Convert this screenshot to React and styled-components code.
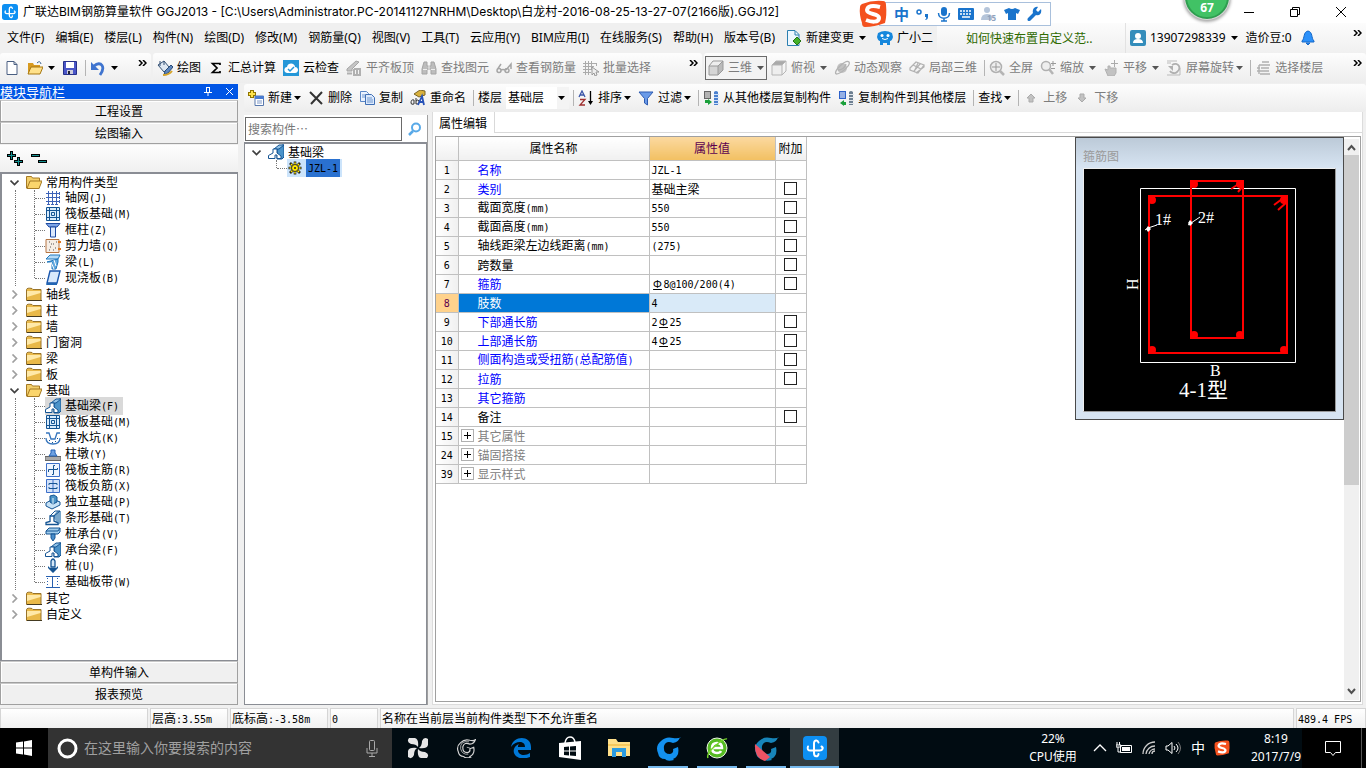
import React from 'react'
import styled, { createGlobalStyle, css } from 'styled-components'

const GlobalStyle=createGlobalStyle`
* { box-sizing: border-box; }
body { margin: 0; background: #f0f0f0; color: #000; font-family: "Noto Sans", "Noto Sans CJK SC", sans-serif; font-size: 12px; line-height: 16px; }
button, input, select { font: inherit; color: inherit; margin: 0; padding: 0; border: 0; background: none; }
button { white-space: nowrap; text-align: left; }
svg { display: block; flex: none; }
ul { list-style: none; margin: 0; padding: 0; }
`;

const song='"Noto Sans CJK SC", sans-serif';

const Page=styled.div`
display: flex;
flex-direction: column;
min-height: 100vh;
overflow: hidden;
`;

const Latin=styled.span`
font-family: "DejaVu Sans Mono", monospace;
font-size: 10px;
white-space: pre;
`;

/* half-width latin set beside full-width chinese */
const Mixed=({text})=>text.split(/([\x20-\x7e]+)/).map((part,i)=>(
  /^[\x20-\x7e]+$/.test(part)?<Latin key={i}>{part}</Latin>:part
));

/* ---------- title bar ---------- */
const TitleBar=styled.header`
position: relative;
display: flex;
align-items: center;
height: 23px;
padding: 0 17px 0 2px;
gap: 5px;
background: #fff;
white-space: nowrap;
`;

const TitleText=styled.h1`
flex: 1;
margin: 0;
font-family: Inter, "Noto Sans CJK SC", sans-serif;
font-size: 12px;
font-weight: 400;
`;

const WindowButtons=styled.div`
display: flex;
gap: 30px;
`;

const Ime=styled.div`
position: absolute;
z-index: 2;
top: 0;
right: 315px;
display: flex;
align-items: center;
height: 27px;
& > svg { z-index: 1; }
`;

const ImeBar=styled.div`
display: flex;
align-items: center;
gap: 7px;
height: 24px;
margin-left: -8px;
padding: 0 8px 0 14px;
border: 1px solid #a9c0dc;
background: #fff;
color: #1a74cc;
font-size: 15px;
font-weight: 700;
`;

const Ball=styled.div`
position: absolute;
z-index: 2;
top: -25px;
right: 137px;
width: 44px;
height: 44px;
padding-top: 23px;
border-radius: 50%;
border: 2px solid #2f9e50;
box-shadow: 0 0 0 1px #d8d8d8, 0 1px 3px 2px #aaa;
background: #41c265;
color: #fff;
font-size: 12px;
font-weight: 700;
text-align: center;
`;

/* ---------- menus and tool strips ---------- */
const MenuRow=styled.nav`
display: flex;
align-items: stretch;
height: 30px;
`;

const MenuList=styled.div`
display: flex;
align-items: center;
gap: 11px;
flex: none;
width: 937px;
padding-left: 7px;
`;

const MenuButton=styled.button`
display: flex;
align-items: center;
gap: 4px;
`;

const Tip=styled.a`
flex: none;
display: flex;
align-items: center;
width: 188px;
padding-left: 29px;
background: linear-gradient(#fcfcfc, #f0f0f0);
color: #2f6a00;
font-family: ${song};
text-decoration: none;
`;

const Account=styled.div`
display: flex;
align-items: center;
gap: 8px;
flex: 1;
padding: 0 4px 0 4px;
border-left: 1px solid #e2e2e2;
background: linear-gradient(#fcfcfc, #f0f0f0);
white-space: nowrap;
`;

const More=styled.button`
align-self: flex-start;
margin: 7px 0 0 auto;
`;

const ToolRow=styled.div`
display: flex;
height: 30px;
margin-bottom: 1px;
gap: 2px;
`;

const Strip=styled.div`
display: flex;
align-items: center;
flex: ${({$width})=>$width?"none":1};
width: ${({$width})=>$width?$width+"px":"auto"};
height: 30px;
padding: 0 4px;
border-radius: 3px;
background: linear-gradient(#fdfdfd, #ededed);
white-space: nowrap;
`;

const PartStrip=styled(Strip)`
flex: none;
height: 28px;
`;

const Tool=styled.button`
display: flex;
align-items: center;
gap: 4px;
margin-right: 7px;
color: ${({$off})=>$off?"#7d7d7d":"#000"};
${({$boxed})=>$boxed&&css`
height: 24px;
margin: 0 4px 0 -3px;
padding: 0 2px;
border: 1px solid #6b6b6b;
background: #f3f3f3;
`}
`;

const Rule=styled.span`
flex: none;
width: 1px;
height: 16px;
margin-right: 4px;
background: #b4b4b4;
`;

const CaretBox=styled.span`
margin-left: ${({$tight})=>$tight?"-2px":"1px"};
`;

const Floor=styled.label`
display: flex;
align-items: center;
gap: 4px;
margin-right: 4px;
`;

const FloorPick=styled.span`
display: flex;
align-items: center;
height: 22px;
padding-right: 4px;
background: linear-gradient(90deg, #fff 51px, #f4f4f4 51px);
`;

const FloorSelect=styled.select`
appearance: none;
width: 51px;
padding-left: 2px;
outline: none;
`;

/* ---------- body ---------- */
const Body=styled.main`
display: flex;
flex: 1;
gap: 6px;
`;

const Sidebar=styled.aside`
display: flex;
flex-direction: column;
flex: none;
width: 238px;
font-family: ${song};
`;

const SideTitle=styled.h2`
display: flex;
align-items: center;
gap: 13px;
height: 15px;
margin: 0 0 1px;
padding-right: 4px;
background: #0055e5;
color: #fff;
font-size: 13px;
font-weight: 400;
line-height: 15px;
`;

const Grow=styled.span`
flex: 1;
`;

const NavButton=styled.button`
height: 22px;
border: 1px solid #a0a0a0;
border-top-color: #c8c8c8;
box-shadow: inset 1px 1px #fff;
background: #f0f0f0;
text-align: center;
`;

const FoldBar=styled.div`
display: flex;
align-items: center;
gap: 8px;
height: 27px;
margin-top: 1px;
padding-left: 7px;
background: linear-gradient(#fdfdfd, #f0f0f0);
`;

const Tree=styled.ul`
flex: 1;
border: solid #8a8d94;
border-width: ${({$thin})=>$thin?"2px 1px 1px 1px":"2px 1px 1px 2px"};
background: #fff;
padding-left: ${({$thin})=>$thin?"0":"1px"};
font-family: ${song};
white-space: nowrap;
`;

const Row=styled.div`
display: flex;
align-items: center;
height: 16px;
line-height: 16px;
`;

const Twist=styled.button`
width: 23px;
padding-left: 7px;
`;

const Leaf=styled.span`
display: flex;
align-items: center;
background: ${({$on})=>$on?"#d9d9d9":"transparent"};
`;

const Label=styled.span`
padding: 0 4px;
`;

const Trunk=styled.span`
align-self: stretch;
width: 19px;
margin-left: 12px;
border-left: 1px dotted ${({$bare})=>$bare?"transparent":"#777"};
`;

const Branch=styled.span`
align-self: flex-start;
width: 11px;
height: ${({$last})=>$last?"8px":"16px"};
border-left: 1px dotted #777;
&::after {
  content: "";
  display: block;
  height: 8px;
  border-bottom: 1px dotted #777;
}
`;

const Work=styled.section`
display: flex;
flex-direction: column;
flex: 1;
min-width: 0;
`;

const Columns=styled.div`
display: flex;
flex: 1;
gap: 4px;
`;

const Parts=styled.div`
display: flex;
flex-direction: column;
flex: none;
width: 184px;
margin-top: 3px;
background: #fff;
border-right: 1px solid #a0a0a0;
font-family: ${song};
`;

const SearchRow=styled.form`
display: flex;
align-items: center;
gap: 5px;
height: 27px;
padding-left: 1px;
`;

const SearchInput=styled.input`
width: 157px;
height: 24px;
padding: 0 2px;
border: 1px solid #6a6a6a;
background: #fff;
&::placeholder { color: #777; opacity: 1; }
`;

const Picked=styled.span`
display: flex;
gap: 3px;
align-items: center;
padding: 0 2px 0 0;
background: #cce4fb;
`;

const PickedName=styled.span`
padding: 0 2px;
background: #2a71d0;
`;

const Editor=styled.div`
display: flex;
flex-direction: column;
flex: 1;
min-width: 0;
margin-right: 3px;
background: #fff;
border: solid #dcdcdc;
border-width: 0 1px 1px;
font-family: ${song};
`;

const Tabs=styled.div`
height: 21px;
border-bottom: 1px solid #d9d9d9;
`;

const Tab=styled.button`
height: 21px;
padding: 0 7px 0 6px;
border-right: 1px solid #d9d9d9;
background: #fff;
`;

const Canvas=styled.div`
display: flex;
align-items: flex-start;
flex: 1;
margin: 3px 1px 2px 2px;
border: 1px solid #a0a0a0;
`;

const Grid=styled.table`
width: 370px;
table-layout: fixed;
border-collapse: collapse;
`;

const HeadCell=styled.th`
height: 23px;
padding: 0;
border: 1px solid #c0c0c0;
border-top: 0;
border-left: 0;
background: ${({$hot})=>$hot?"linear-gradient(#fbd9a0, #f2c062)":"linear-gradient(#fff, #f0f0f0)"};
color: ${({$hot})=>$hot?"#5c0050":"#000"};
font-weight: 400;
`;

const NumCell=styled.th`
height: 19px;
padding: 0;
border: solid #c0c0c0;
border-width: 0 1px 1px 0;
background: ${({$on})=>$on?"#ffd28c":"linear-gradient(90deg, #fff, #f0f0f0)"};
color: ${({$on})=>$on?"#5c0050":"#000"};
font-weight: 400;
line-height: 16px;
`;

const nameColors={blue:"#0000ff",black:"#000",gray:"#808080"};

const NameCell=styled.td`
padding: 0 0 0 ${({$fold})=>$fold?"2px":"19px"};
border: solid #c0c0c0;
border-width: 0 1px 1px 0;
background: ${({$on})=>$on?"#0078d7":"#fff"};
color: ${({$tone,$on})=>$on?"#fff":nameColors[$tone]};
line-height: 16px;
`;

const FoldName=styled.span`
display: flex;
align-items: center;
gap: 4px;
`;

const Plus=styled.button`
display: flex;
align-items: center;
justify-content: center;
width: 13px;
height: 13px;
border: 1px solid #b0b0b0;
color: #000;
`;

const ValueCell=styled.td`
padding: 0 0 0 2px;
border: solid #c0c0c0;
border-width: 0 1px 1px 0;
background: ${({$on})=>$on?"#d9eaf8":"#fff"};
line-height: 16px;
`;

const Steel=styled.span`
display: inline-block;
width: 12px;
font-size: 11px;
text-align: center;
text-decoration: underline;
`;

const CheckCell=styled.td`
padding: 0;
border: solid #c0c0c0;
border-width: 0 1px 1px 0;
line-height: 0;
text-align: center;
`;

const Check=styled.input`
appearance: none;
width: 13px;
height: 13px;
border: 1px solid #222;
background: #fff;
vertical-align: top;
`;

const Preview=styled.figure`
display: flex;
flex-direction: column;
margin: 0 0 0 auto;
padding: 0 7px 7px;
border: 1px solid #4a4a4a;
background: linear-gradient(#bccad8, #d7e4f2 30px);
`;

const Caption=styled.figcaption`
height: 30px;
padding-top: 10px;
color: #9a9a9a;
`;

const Drawing=styled.svg`
width: 253px;
height: 244px;
border: 1px solid #eee;
border-right-color: #999;
border-bottom-color: #999;
background: #000;
font-family: "Liberation Serif", "Noto Sans CJK SC", serif;
`;

const ScrollBar=styled.div`
display: flex;
flex-direction: column;
align-self: stretch;
align-items: center;
width: 15px;
margin: 2px 1px 1px 0;
padding: 5px 0;
background: #f0f0f0;
`;

const Thumb=styled.span`
width: 15px;
height: 330px;
margin: 4px 0 auto;
background: #cdcdcd;
`;

/* ---------- status bar ---------- */
const StatusBar=styled.footer`
display: flex;
gap: 2px;
height: 20px;
margin-top: 3px;
font-family: ${song};
`;

const StatusCell=styled.span`
flex: ${({$width})=>$width?"none":1};
width: ${({$width})=>$width?$width+"px":"auto"};
padding-left: 1px;
border: 1px solid #d5d5d5;
border-bottom: 0;
background: linear-gradient(#fff, #f0f0f0);
line-height: 18px;
white-space: nowrap;
`;

/* ---------- task bar ---------- */
const TaskBar=styled.nav`
display: flex;
align-items: stretch;
height: 40px;
background: #010c12;
color: #fff;
`;

const Start=styled.button`
display: flex;
align-items: center;
justify-content: center;
width: 48px;
background: #000;
`;

const TaskSearch=styled.label`
display: flex;
align-items: center;
gap: 6px;
width: 344px;
padding: 0 14px 0 9px;
background: #333;
`;

const TaskInput=styled.input`
flex: 1;
min-width: 0;
font-size: 14px;
&::placeholder { color: #a0a0a0; opacity: 1; }
`;

const TaskGroup=styled.div`
display: flex;
padding-left: ${({$pad})=>$pad}px;
`;

const TaskButton=styled.button`
display: flex;
align-items: center;
justify-content: center;
width: ${({$narrow})=>$narrow?"48px":"49px"};
background: ${({$on})=>$on?"#333d41":"transparent"};
${({$open})=>$open&&css`background: linear-gradient(#76b9ed, #76b9ed) center bottom / 40px 2px no-repeat;`}
${({$on})=>$on&&css`box-shadow: inset 0 -2px #76b9ed;`}
`;

const Tray=styled.div`
display: flex;
align-items: center;
margin-left: auto;
gap: 9px;
background: linear-gradient(90deg, #010c12 280px, #000 280px);
`;

const Stack=styled.div`
width: ${({$width})=>$width}px;
text-align: center;
line-height: 18px;
`;

const InputMode=styled.span`
font-size: 14px;
`;

const Notice=styled.button`
display: flex;
align-items: center;
justify-content: flex-end;
align-self: stretch;
width: 40px;
margin-right: 4px;
padding-right: 19px;
border-right: 1px solid #555;
`;

/* ---------- drawings ---------- */
const Pic=({w=16,h=16,box,children,...rest})=>(
  <svg width={w} height={h} viewBox={box||`0 0 ${w} ${h}`} fill="none" aria-hidden="true" {...rest}>{children}</svg>
);

const Caret=({tight,color="#000"})=>(
  <CaretBox $tight={tight}><Pic w={7} h={4}><path d="M0 0h7L3.500 4z" fill={color}/></Pic></CaretBox>
);

const Chevrons=()=><Pic w={9} h={6}><path d="M1 0l3 3-3 3M5 0l3 3-3 3" stroke="#000" strokeWidth="1.500"/></Pic>;

const AppLogo=({size=16})=>(
  <Pic w={size} h={size} box="0 0 24 24">
    <rect width="24" height="24" rx="4" fill="#0d8ff2"/>
    <path d="M15.500 6.500C14.500 3.500 11 4 11 7.500V17c0 4.500 4.500 4 4.500 1M5 10.500c-1 2.500 0 4 2.500 4h9c3.500 0 4-3 2-4" stroke="#fff" strokeWidth="2" strokeLinecap="round"/>
  </Pic>
);

const Sogou=({size=28})=>(
  <Pic w={size} h={size} box="0 0 28 28">
    <path d="M3 4Q13 0 24 1q3 0 3 4 1 10-1 18-11 4-20 4-3 0-3-4Q0 14 1 7q0-2 2-3z" fill="#f4511e"/>
    <path d="M21 7Q9 4 8 10c0 5 12 3 12 8 0 5-8 4-13 2" stroke="#fff" strokeWidth="4"/>
  </Pic>
);

const icons={
  page:<path d="M3 1.500h7l3 3v10H3zM10 1.500v3h3" fill="#fff" stroke="#4a5f82"/>,
  open:<><path d="M1 3h5l1 2h6v9H1z" fill="#d79a20"/><path d="M4 7h12l-3 7H1z" fill="#ffe18a" stroke="#a67712"/><path d="M10 3q3-3 4 1" stroke="#38618f"/></>,
  save:<><path d="M1.500 1.500h13v13h-13z" fill="#4a56c8" stroke="#26308a"/><path d="M4 2h8v6H4z" fill="#fff"/><path d="M5 10h6v4H5z" fill="#ccd"/><path d="M6 11h2v3H6z" fill="#223"/></>,
  undo:<><path d="M4 6c7-6 12 1 6 9" stroke="#3f74cf" strokeWidth="2.800"/><path d="M1 2v8h8z" fill="#3f74cf"/></>,
  paint:<><path d="M1 5l6-4 5 6-5 5z" fill="#dfe8f2" stroke="#345174"/><path d="M3 6V1M7 5V1" stroke="#345174"/><path d="M14 5l2 2-5 6-4 2 1-4z" fill="#5e86bd" stroke="#284a76"/><path d="M6 15q6 0 9-4" stroke="#d6a42a" strokeWidth="2"/></>,
  sum:<path d="M12 5V3.500H4.500L9 8l-4.500 4.500H12V11" stroke="#000" strokeWidth="1.700"/>,
  cloud:<><path d="M0 0h16v16H0z" fill="#2497d8"/><path d="M4 13c-4-1-3-6 0-6 1-5 8-4 8 0 4 0 4 6 0 6z" fill="#fff"/><path d="M5 9l2 2 4-4" stroke="#2497d8" strokeWidth="1.500"/></>,
  level:<><path d="M1 9l9-8 3 1-7 7v2H1z" fill="#c4c4c4" stroke="#a5a5a5"/><path d="M1 13.500h5M8 9v6M11 8v7M14 8v7M7 15h8M8 9h7" stroke="#b0b0b0" strokeWidth="2"/></>,
  binoc:<><path d="M3 2h3v4h4V2h3l2 7v5h-5V9H6v5H1V9z" fill="#bdbdbd" stroke="#a5a5a5"/><path d="M2 9.500h4M10 9.500h4M8 5v4" stroke="#eee"/></>,
  glasses:<path d="M1 10l4-6M10 10l5-6v5M1 10.500a2 2 0 104 0 2 2 0 10-4 0M9 10.500a2 2 0 104 0 2 2 0 10-4 0M5 10q2-1 4 0" stroke="#a5a5a5" strokeWidth="1.500"/>,
  batch:<><path d="M2.500 1v14M5.500 1v14M8.500 1v9M0 3.500h14M0 6.500h11M0 9.500h8M0 12.500h8M13.500 3v3" stroke="#ababab"/><path d="M9 7l7 5h-3l1 3-2 1-1-3-2 2z" fill="#eee" stroke="#999"/></>,
  cube:<><path d="M1 6h9v9H1z" fill="#d5d5d5"/><path d="M1 6l4-5h10l-4 5z" fill="#eee"/><path d="M10 6l5-5v9l-5 5z" fill="#bbb"/><path d="M1 6l4-5h10v9l-5 5H1zM1 6h9v9M10 6l5-5" stroke="#999"/></>,
  top:<><path d="M1 5l4-4h10l-4 4z" fill="#aaa"/><path d="M1 5h10v10H1z" fill="#eee"/><path d="M1 5l4-4h10v10l-4 4H1zM1 5h10v10M11 5l4-4" stroke="#b5b5b5"/></>,
  orbit:<><circle cx="8" cy="8" r="5" fill="#c2c2c2"/><path d="M2 14C-1 11 12-1 15 2c2 3-8 12-13 12M4 10q6 0 8-6" stroke="#b2b2b2" strokeWidth="1.300"/></>,
  local:<path d="M1 8l6-6 8 3-6 8-8-3zM4 5l8 4M5 11l6-7M9 3l-4 9M7 13l8-6V5" stroke="#b2b2b2" strokeWidth="1.200"/>,
  full:<><circle cx="7" cy="7" r="5.500" fill="#eee" stroke="#b0b0b0" strokeWidth="1.500"/><path d="M7 3v8M3 7h8" stroke="#999"/><path d="M11 11l4 4" stroke="#b5b5b5" strokeWidth="2.500"/></>,
  zoom:<><circle cx="6" cy="6" r="4.500" fill="#eee" stroke="#b0b0b0" strokeWidth="1.500"/><path d="M9 9l4 5" stroke="#b5b5b5" strokeWidth="2.500"/><path d="M13 1v5M11 3.500h5M11 8.500h4" stroke="#999"/></>,
  hand:<><path d="M2 9l3 1V6h2v2h6v5l-2 3H5z" fill="#c2c2c2" stroke="#b0b0b0"/><path d="M11.500 0v7M8 3.500h7" stroke="#aaa"/></>,
  turn:<><path d="M1 1h10M1 3h4M1 15h13V8" stroke="#bbb"/><path d="M6 5c6-4 10 3 5 7-2 2-6 1-7-1" stroke="#b0b0b0" strokeWidth="1.800"/><path d="M2 6h5v5z" fill="#b0b0b0"/></>,
  floors:<path d="M7 2h7M4 5h11M4 5v9M6 8h8M2 11h12M5 14h10M2 8h3" stroke="#b0b0b0" strokeWidth="1.400"/>,
  create:<><path d="M4 0v8M0 4h8" stroke="#907500" strokeWidth="4"/><path d="M4 1v6M1 4h6" stroke="#ffe24a" strokeWidth="2"/><path d="M7 6h8.500v9.500H7z" fill="#fff" stroke="#5878ad"/><path d="M7 6h9v3H7z" fill="#4a7bd0"/><path d="M9 11h5M9 13h5" stroke="#7c98c8"/></>,
  remove:<path d="M2 2l12 12M14 2L3 14" stroke="#333" strokeWidth="2"/>,
  copy:<><path d="M1.500 1.500h6l2 2v8h-8z" fill="#eaf2ff" stroke="#5b87c7"/><path d="M6.500 4.500h6l3 3v7h-9z" fill="#dce9fc" stroke="#3f6fb5"/><path d="M8 8h5M8 10h6M8 12h6M3 5h3M3 7h3" stroke="#6f97cf"/></>,
  rename:<><path d="M4 4l6-4 5 1v4l-6 2z" fill="#d9b13c" stroke="#7a6424"/><path d="M1 13q0-4 3-3v4q-3 1-3-1M6 8v6q4 0 3-3-1-2-3 0" stroke="#333"/><path d="M8 15l4-9 2 9M10 12h4" stroke="#2853b8" strokeWidth="1.800"/></>,
  sort:<><path d="M1 7l3-6 3 6M2 5h4" stroke="#3a55a8" strokeWidth="1.300"/><path d="M2 9.500h5l-5 5.500h5" stroke="#a03030" strokeWidth="1.300"/><path d="M12.500 1v12" stroke="#000" strokeWidth="1.300"/><path d="M10 11h5l-2.500 4z" fill="#000"/></>,
  filter:<path d="M1 2h14L9.500 8.500V15l-3-2V8.500z" fill="#6b9be8" stroke="#2d5bb1"/>,
  fromFloor:<><path d="M1 1h7v8H1z" fill="#666"/><path d="M2 3h5M2 5h5M2 7h5" stroke="#fff"/><path d="M11 2q2-2 4 0v13h-4z" fill="#4b80ce"/><path d="M11 4.500h5M11 7.500h5M11 10.500h5M11 13.500h5" stroke="#cfe0f8"/><path d="M2 10v3h3v2l4-3-4-3v1z" fill="#1ba03b"/></>,
  toFloor:<><path d="M1 1h7v8H1z" fill="#2d62ca"/><path d="M2 3h5M2 5h5M2 7h5" stroke="#fff"/><path d="M11 2q2-2 4 0v13h-4z" fill="#6d7f91"/><path d="M11 4.500h5M11 7.500h5M11 10.500h5M11 13.500h5" stroke="#e0e5ea"/><path d="M8 15v-3H6v-2l-4 3 4 3v-1z" fill="#1ba03b"/></>,
  up:<path d="M8 4l4 4h-2v4H6V8H4z" fill="#c2c2c2" stroke="#ababab"/>,
  down:<path d="M8 12L4 8h2V4h4v4h2z" fill="#c2c2c2" stroke="#ababab"/>,
  change:<><path d="M1.500.5H9l4 4v11H1.500z" fill="#edf7ff" stroke="#2b7fb0"/><path d="M9 1v4h4" stroke="#2b7fb0"/><path d="M11 7l4 4-4 4-4-4z" fill="#43b02a" stroke="#257512"/></>,
  robot:<><path d="M1 3Q8-1 15 3l1 4q-1 4-3 4v4h-3v-2H6v2H3v-4Q1 11 0 7z" fill="#1687dc"/><circle cx="5" cy="5.500" r="1.500" fill="#fff"/><circle cx="11" cy="5.500" r="1.500" fill="#fff"/><path d="M5 8.500q3 2 6 0" stroke="#fff"/></>,
  user:<><rect width="16" height="16" rx="2" fill="#348dbb"/><circle cx="8" cy="6" r="3" fill="#fff"/><path d="M3 13q0-4 5-4t5 4z" fill="#fff"/></>,
  bell:<path d="M8 1c5 1 3 7 6 10v1H2v-1C5 8 3 2 8 1zM6 13h4l-2 2z" fill="#2c91fa" stroke="#1669c8"/>,
  folder:<><path d="M.5 3.500Q1 1.500 6 2.500l1 1h8v11H.5z" fill="#e9b949" stroke="#98732a"/><path d="M1 5h13.500v2L1 11z" fill="#ffe9a8"/><path d="M1 14.500h15" stroke="#443a20"/></>,
  folderOpen:<><path d="M.5 2.500h5l1 1.500h7v10H.5z" fill="#f3cf6b" stroke="#a67a24"/><path d="M4 7h12l-3 7.500H1z" fill="#fbd56c" stroke="#a67a24"/></>,
  axis:<path d="M3.500 1v14M7.500 1v14M11.500 1v14M1 3.500h14M1 7.500h14M1 11.500h14M14.500 2v3M14.500 6v3M14.500 10v3M2 14.500h3M6 14.500h3M10 14.500h3" stroke="#3d63b8"/>,
  raft:<><path d="M1.500 1.500h13v13h-13z" fill="#d9ecfc" stroke="#145493"/><path d="M4.500 1v14M11.500 1v14M1 4.500h14M1 11.500h14M6.500 6.500h3v3h-3z" stroke="#145493"/></>,
  column:<><path d="M1 1.500h14L12 5H4z" fill="#7da4e5" stroke="#1d4aa2"/><path d="M5.500 5h5v10h-5z" fill="#dbe8fb" stroke="#1d4aa2"/></>,
  wall:<><path d="M1 1.500h13v13H1z" fill="#f6eee6" stroke="#b57542"/><path d="M4 4h1M8 6h1M5 9h1M10 10h1M4 12h1M8 12h1M11 4h1M6 6h1" stroke="#555"/><path d="M13 4h3M13 11h3" stroke="#e07820" strokeWidth="2"/></>,
  beam:<><path d="M1 5l4-4h10l-2 4z" fill="#b5daf6" stroke="#2178bd"/><path d="M2 8l11-3v3l-2 7H7V8z" fill="#63aadf" stroke="#2178bd"/><path d="M6 8l3 7M9 6l2 6" stroke="#fff"/></>,
  slab:<><path d="M5 1h10l-3 12H2z" fill="#d8e9fc" stroke="#1b57ad" strokeWidth="1.400"/><path d="M2 13h10v2H1z" fill="#2165b3"/></>,
  footBeam:<><path d="M9 15V5l5-4h2v12l-2 2z" fill="#4b93c9" stroke="#145493"/><path d="M6 5l5-4h5l-5 4z" fill="#8fc1e6" stroke="#145493"/><path d="M.5 14.500v-3L5 9V5h4v4l4 3v2.500H9V11H7v3.500z" fill="#fff" stroke="#145493"/></>,
  pit:<><path d="M1 3h3l2 6h4l2-6h3M1 8q0 6 7 6t7-6" stroke="#3675bd" strokeWidth="1.300"/><path d="M4 10.500h1M7 12.500h1M10 11.500h1M12 8.500h1" stroke="#145493"/></>,
  pier:<><path d="M0 10.500h16v4H0z" fill="#aaa" stroke="#666"/><path d="M4 10l2-3V4h4v3l2 3z" fill="#6da1e2" stroke="#2361b5"/></>,
  main:<><path d="M1.500 1.500h13v13h-13z" fill="#eef5ff" stroke="#3c6fc8"/><path d="M10 3.500H8.500v9H7M3.500 10V7.500h9V6" stroke="#145493"/></>,
  negative:<><path d="M1.500 1.500h13v13h-13z" fill="#d2e2fa" stroke="#3c6fc8"/><path d="M8 2v12" stroke="#3c6fc8"/><path d="M4 7V5.500h8V7M4 9v1.500h8V9" stroke="#145493"/></>,
  single:<><path d="M1 9l7-4 7 3v3l-8 4-6-3z" fill="#c7e2f6" stroke="#145493"/><path d="M5 2l4-1 3 2v5L8 10 5 8z" fill="#4b93c6" stroke="#145493"/><path d="M8 4v6" stroke="#dff0fb"/></>,
  strip:<><path d="M8 6l4-5h4v12l-3 2z" fill="#79a7cb"/><path d="M1 14.500v-2l4-1V6h4v5l4 2v1.500z" fill="#fff" stroke="#145493" strokeWidth="1.300"/><path d="M5 6l5-5h5M9 6l6-5" stroke="#145493"/></>,
  cap:<><path d="M1 5l3-3h11v4l-2 2H1z" fill="#9fccec" stroke="#145493"/><path d="M1 5h12l2-3" stroke="#145493"/><path d="M6 8h4v4l-2 3-2-3z" fill="#4a8ecb" stroke="#145493"/></>,
  pile:<><path d="M6 3q2-4 4 0v6H6z" fill="#d5e8f8" stroke="#145493" strokeWidth="1.300"/><path d="M3 8l2 2h6l2-2v2l-5 5-5-5z" fill="#145493"/></>,
  band:<><path d="M1 2.500h14M1 13.500h14M7.500 3v10" stroke="#2860b0"/><path d="M2.500 4v9M12.500 4v9" stroke="#2860b0" strokeDasharray="1 2"/></>,
  gear:<><path d="M8 1.500v13M1.500 8h13M3 3l10 10M13 3L3 13" stroke="#222" strokeWidth="2.600"/><path d="M8 2.500v11M2.500 8h11M4 4l8 8M12 4l-8 8" stroke="#ffe800" strokeWidth="1.500"/><circle cx="8" cy="8" r="3.500" fill="#ffe800" stroke="#333"/><circle cx="8" cy="8" r="1" fill="#222"/></>,
};

const Icon=({name})=><Pic>{icons[name]}</Pic>;

const Arrow=({open})=>(
  <Pic w={9} h={9}>{open
    ?<path d="M.5 2.500l4 4 4-4" stroke="#404040" strokeWidth="1.700"/>
    :<path d="M2.500.5l4 4-4 4" stroke="#a0a0a0" strokeWidth="1.700"/>}</Pic>
);

/* ---------- data ---------- */
const menus=["文件(F)","编辑(E)","楼层(L)","构件(N)","绘图(D)","修改(M)","钢筋量(Q)","视图(V)","工具(T)","云应用(Y)","BIM应用(I)","在线服务(S)","帮助(H)","版本号(B)"];

const drawTools=[["paint","绘图"],["sum","汇总计算"],["cloud","云检查"],["level","平齐板顶",1],["binoc","查找图元",1],["glasses","查看钢筋量",1],["batch","批量选择",1]];

const groups=[
  {name:"常用构件类型",items:[["axis","轴网(J)"],["raft","筏板基础(M)"],["column","框柱(Z)"],["wall","剪力墙(Q)"],["beam","梁(L)"],["slab","现浇板(B)"]]},
  {name:"轴线"},{name:"柱"},{name:"墙"},{name:"门窗洞"},{name:"梁"},{name:"板"},
  {name:"基础",items:[["footBeam","基础梁(F)",true],["raft","筏板基础(M)"],["pit","集水坑(K)"],["pier","柱墩(Y)"],["main","筏板主筋(R)"],["negative","筏板负筋(X)"],["single","独立基础(P)"],["strip","条形基础(T)"],["cap","桩承台(V)"],["footBeam","承台梁(F)"],["pile","桩(U)"],["band","基础板带(W)"]]},
  {name:"其它"},{name:"自定义"},
];

const props=[
  {n:1,name:"名称",tone:"blue",value:"JZL-1"},
  {n:2,name:"类别",tone:"blue",value:"基础主梁",check:true},
  {n:3,name:"截面宽度(mm)",tone:"black",value:"550",check:true},
  {n:4,name:"截面高度(mm)",tone:"black",value:"550",check:true},
  {n:5,name:"轴线距梁左边线距离(mm)",tone:"black",value:"(275)",check:true},
  {n:6,name:"跨数量",tone:"black",value:"",check:true},
  {n:7,name:"箍筋",tone:"blue",value:"Φ8@100/200(4)",check:true},
  {n:8,name:"肢数",tone:"blue",value:"4",on:true},
  {n:9,name:"下部通长筋",tone:"blue",value:"2Φ25",check:true},
  {n:10,name:"上部通长筋",tone:"blue",value:"4Φ25",check:true},
  {n:11,name:"侧面构造或受扭筋(总配筋值)",tone:"blue",value:"",check:true},
  {n:12,name:"拉筋",tone:"blue",value:"",check:true},
  {n:13,name:"其它箍筋",tone:"blue",value:""},
  {n:14,name:"备注",tone:"black",value:"",check:true},
  {n:15,name:"其它属性",tone:"gray",value:"",fold:true},
  {n:24,name:"锚固搭接",tone:"gray",value:"",fold:true},
  {n:39,name:"显示样式",tone:"gray",value:"",fold:true},
];

const Value=({text})=>text.split(/(Φ)/).map((part,i)=>(
  part==="Φ"?<Steel key={i}>Φ</Steel>:<Mixed key={i} text={part}/>
));

const Top=()=>(
  <>
    <TitleBar>
      <AppLogo/>
      <TitleText>广联达BIM钢筋算量软件 GGJ2013 - [C:\Users\Administrator.PC-20141127NRHM\Desktop\白龙村-2016-08-25-13-27-07(2166版).GGJ12]</TitleText>
      <Ime>
        <Sogou/>
        <ImeBar>
          中
          <Pic w={14} h={16}><circle cx="3" cy="6" r="2" stroke="#1a74cc" strokeWidth="1.500"/><path d="M9 8h3v3q0 3-3 3 2-2 1-3H9z" fill="#1a74cc"/></Pic>
          <Pic w={14} h={16}><rect x="4" y="1" width="6" height="9" rx="3" fill="#1a74cc"/><path d="M1.500 7c0 7 11 7 11 0M7 12v3M4 15h6" stroke="#1a74cc" strokeWidth="1.500"/></Pic>
          <Pic w={16} h={16}><rect y="2" width="16" height="12" rx="1" fill="#1a74cc"/><path d="M2 5h12M2 8h12" stroke="#fff" strokeWidth="1.500" strokeDasharray="2 1"/><path d="M4 11h8" stroke="#fff" strokeWidth="1.500"/></Pic>
          <Pic w={16} h={16}><circle cx="6" cy="4" r="3" fill="#b5c5da"/><path d="M0 14q0-6 6-6 4 0 5 2v4z" fill="#b5c5da"/><text x="6" y="15" fontSize="8" fill="#8fa3bd">15</text></Pic>
          <Pic w={16} h={16}><path d="M5 2q3 2 6 0l5 2-2 4-2-1v7H4V7L2 8 0 4z" fill="#1a74cc"/></Pic>
          <Pic w={15} h={16}><path d="M14 3l-3 3-2-2 2-3C7 0 5 4 6 7l-5 5c-2 3 2 4 3 2l5-5c4 1 6-2 5-6z" fill="#1a74cc"/></Pic>
        </ImeBar>
      </Ime>
      <Ball>67</Ball>
      <WindowButtons>
        <button aria-label="最小化"><Pic w={16} h={12}><path d="M3 6.500h10" stroke="#000"/></Pic></button>
        <button aria-label="还原"><Pic w={16} h={12}><path d="M3.500 3.500h7v7h-7zM5.500 3V1.500h7v7H11" stroke="#000"/></Pic></button>
        <button aria-label="关闭"><Pic w={16} h={12}><path d="M3 1l10 10M13 1L3 11" stroke="#000"/></Pic></button>
      </WindowButtons>
    </TitleBar>
    <MenuRow>
      <MenuList>
        {menus.map(m=><MenuButton key={m}>{m}</MenuButton>)}
        <MenuButton><Icon name="change"/>新建变更<Caret/></MenuButton>
        <MenuButton><Icon name="robot"/>广小二</MenuButton>
      </MenuList>
      <Tip href="#tip">如何快速布置自定义范..</Tip>
      <Account>
        <MenuButton><Icon name="user"/>13907298339<Caret/></MenuButton>
        <span>造价豆:0</span>
        <Icon name="bell"/>
        <More aria-label="更多"><Chevrons/></More>
      </Account>
    </MenuRow>
    <ToolRow>
      <Strip $width={151}>
        <Tool aria-label="新建工程"><Icon name="page"/></Tool>
        <Tool aria-label="打开"><Icon name="open"/><Caret/></Tool>
        <Tool aria-label="保存"><Icon name="save"/></Tool>
        <Rule/>
        <Tool aria-label="撤销"><Icon name="undo"/><Caret/></Tool>
        <More aria-label="更多"><Chevrons/></More>
      </Strip>
      <Strip $width={549}>
        {drawTools.map(([icon,name,off])=><Tool key={name} $off={off}><Icon name={icon}/>{name}</Tool>)}
        <More aria-label="更多"><Chevrons/></More>
      </Strip>
      <Strip>
        <Tool $off $boxed><Icon name="cube"/>三维<Caret color="#555"/></Tool>
        <Tool $off><Icon name="top"/>俯视<Caret color="#555"/></Tool>
        <Tool $off><Icon name="orbit"/>动态观察</Tool>
        <Tool $off><Icon name="local"/>局部三维</Tool>
        <Rule/>
        <Tool $off><Icon name="full"/>全屏</Tool>
        <Tool $off><Icon name="zoom"/>缩放<Caret color="#555"/></Tool>
        <Tool $off><Icon name="hand"/>平移<Caret color="#555"/></Tool>
        <Tool $off><Icon name="turn"/>屏幕旋转<Caret tight color="#555"/></Tool>
        <Rule/>
        <Tool $off><Icon name="floors"/>选择楼层</Tool>
        <More aria-label="更多"><Chevrons/></More>
      </Strip>
    </ToolRow>
  </>
);

const Side=()=>(
  <Sidebar>
    <SideTitle>
      模块导航栏<Grow/>
      <Pic w={8} h={9}><path d="M2 .5h4M2.500 0v5M5.500 0v5M0 5.500h8M4 6v3" stroke="#fff"/></Pic>
      <Pic w={9} h={9}><path d="M1 1l7 7M8 1L1 8" stroke="#fff"/></Pic>
    </SideTitle>
    <NavButton>工程设置</NavButton>
    <NavButton>绘图输入</NavButton>
    <FoldBar>
      <button aria-label="全部展开"><Pic w={16} h={15}><path d="M4.500 0v9M0 4.500h9M11.500 6v9M7 10.500h9" stroke="#000" strokeWidth="3"/><path d="M4.500 1v7M1 4.500h7M11.500 7v7M8 10.500h7" stroke="#139090"/></Pic></button>
      <button aria-label="全部折叠"><Pic w={16} h={15}><path d="M0 4.500h9M7 10.500h9" stroke="#000" strokeWidth="3"/><path d="M1 4.500h7M8 10.500h7" stroke="#139090"/></Pic></button>
    </FoldBar>
    <Tree>
      {groups.map(g=>(
        <li key={g.name}>
          <Row>
            <Twist aria-label={g.name}><Arrow open={!!g.items}/></Twist>
            <Icon name={g.items?"folderOpen":"folder"}/>
            <Label>{g.name}</Label>
          </Row>
          {g.items&&(
            <ul>
              {g.items.map(([icon,name,on],i)=>(
                <li key={name}>
                  <Row>
                    <Trunk/><Branch $last={i===g.items.length-1}/>
                    <Leaf $on={on}>
                      <Icon name={icon}/>
                      <Label><Mixed text={name}/></Label>
                    </Leaf>
                  </Row>
                </li>
              ))}
            </ul>
          )}
        </li>
      ))}
    </Tree>
    <NavButton>单构件输入</NavButton>
    <NavButton>报表预览</NavButton>
  </Sidebar>
);

const PartList=()=>(
  <Parts>
    <SearchRow>
      <SearchInput aria-label="搜索构件" placeholder="搜索构件…"/>
      <button type="button" aria-label="搜索"><Pic><circle cx="9" cy="6.500" r="4" stroke="#58a9e8" strokeWidth="2"/><path d="M6 10l-4 4" stroke="#58a9e8" strokeWidth="2.500"/></Pic></button>
    </SearchRow>
    <Tree $thin>
      <li>
        <Row><Twist aria-label="基础梁"><Arrow open/></Twist><Icon name="footBeam"/><Label>基础梁</Label></Row>
        <Row>
          <Trunk $bare/><Branch $last/>
          <Picked><Icon name="gear"/><PickedName><Mixed text="JZL-1"/></PickedName></Picked>
        </Row>
      </li>
    </Tree>
  </Parts>
);

const Stirrup=()=>(
  <Preview>
    <Caption>箍筋图</Caption>
    <Drawing viewBox="0 0 251 242">
      <path d="M56.500 19.500h155v174h-155z" fill="none" stroke="#fff"/>
      <path d="M65 27h138v157H65zM107 12h52v157h-52z" fill="none" stroke="#f00" strokeWidth="2"/>
      <path d="M147 20l12-8M154 23l5-6M190 36l12-9M194 41l9-8" stroke="#f00" strokeWidth="2"/>
      {[[68,31],[200,31],[68,181],[200,181],[110,15],[156,15],[110,166],[156,166]].map(([x,y])=>(
        <circle key={x+"-"+y} cx={x} cy={y} r="4" fill="#f00"/>
      ))}
      <path d="M61 61l3-2 9-3M104 56l3-2 9-6" fill="none" stroke="#fff"/>
      <path d="M64 57l3 3-3 3-2-3zM106 51l3 3-3 3-2-3z" fill="#fff"/>
      <g fill="#fff" fontSize="16">
        <text x="71" y="56">1#</text>
        <text x="114" y="54">2#</text>
        <text x="126" y="207">B</text>
        <text transform="translate(54 121) rotate(-90)">H</text>
        <text x="95" y="228" fontSize="21">4-1型</text>
      </g>
    </Drawing>
  </Preview>
);

const PropertyEditor=()=>(
  <Editor>
    <Tabs role="tablist"><Tab role="tab" aria-selected="true">属性编辑</Tab></Tabs>
    <Canvas>
      <Grid>
        <colgroup><col width="22"/><col width="191"/><col width="126"/><col width="31"/></colgroup>
        <thead>
          <tr><HeadCell/><HeadCell>属性名称</HeadCell><HeadCell $hot>属性值</HeadCell><HeadCell>附加</HeadCell></tr>
        </thead>
        <tbody>
          {props.map(p=>(
            <tr key={p.n}>
              <NumCell $on={p.on}><Mixed text={String(p.n)}/></NumCell>
              <NameCell $on={p.on} $tone={p.tone} $fold={p.fold}>
                {p.fold
                  ?<FoldName><Plus aria-label={"展开"+p.name}><Pic w={7} h={7}><path d="M0 3.500h7M3.500 0v7" stroke="#000"/></Pic></Plus>{p.name}</FoldName>
                  :<Mixed text={p.name}/>}
              </NameCell>
              <ValueCell $on={p.on}><Value text={p.value}/></ValueCell>
              <CheckCell>{p.check&&<Check type="checkbox" aria-label={p.name+"附加"}/>}</CheckCell>
            </tr>
          ))}
        </tbody>
      </Grid>
      <Stirrup/>
      <ScrollBar>
        <Pic w={9} h={7}><path d="M1 6l3.500-4L8 6" stroke="#505050" strokeWidth="2"/></Pic>
        <Thumb/>
        <Pic w={9} h={7}><path d="M1 1l3.500 4L8 1" stroke="#505050" strokeWidth="2"/></Pic>
      </ScrollBar>
    </Canvas>
  </Editor>
);

const Swirl=({size=26,color,outline,children})=>(
  <Pic w={size} h={size} box="0 0 26 26">
    <path d="M25 2q-1 5-7 6-7-3-9 3-1 8 6 8 4-1 3-5l5-2q2 9-5 12l1 1q-7 2-9-1-6 0-7-6-3-7 3-12 5-5 12-3 5 1 8-1z" fill={outline?"none":color} stroke={outline?color:"none"} strokeWidth="1.500"/>
    {outline&&<path d="M17 5Q5 3 6 14q2 8 10 7M18 13l-4-1" stroke={color}/>}
    {children}
  </Pic>
);

const Tasks=()=>(
  <TaskBar>
    <Start aria-label="开始"><Pic w={16} h={16}><path d="M0 2.500L7 1.500V7.500H0zM8 1.500L16 0V7.500H8zM0 8.500h7v6L0 13.500zM8 8.500h8V16L8 14.500z" fill="#fff"/></Pic></Start>
    <TaskSearch>
      <Pic w={21} h={21}><circle cx="10.500" cy="10.500" r="8.500" stroke="#fff" strokeWidth="3"/></Pic>
      <TaskInput aria-label="搜索" placeholder="在这里输入你要搜索的内容"/>
      <Pic w={12} h={17}><rect x="3.500" y=".5" width="5" height="10" rx="1" stroke="#aaa"/><path d="M1 8v5h10V8M6 13v3M3 16.500h6" stroke="#aaa"/></Pic>
    </TaskSearch>
    <TaskGroup $pad={2}>
      <TaskButton $narrow aria-label="风扇"><Pic w={22} h={22}><path d="M2 1h6q4 1 3 9-2-3-7-3-5-2-2-6zM21 2v6q-1 4-9 3 3-2 3-7 2-5 6-2zM20 21h-6q-4-1-3-9 2 3 7 3 5 2 2 6zM1 20v-6q1-4 9-3-3 2-3 7-2 5-6 2z" fill="#e6e6e6"/></Pic></TaskButton>
      <TaskButton $narrow aria-label="广联达"><Swirl size={20} outline color="#d5d5d5"/></TaskButton>
    </TaskGroup>
    <TaskGroup $pad={6}>
      <TaskButton aria-label="Edge"><Pic w={20} h={20}><path d="M0 9C2-3 20-3 20 9v3H7c0 6 8 6 12 3v4C9 23 1 18 3 11c1-3 3-4 5-5-1 1-1 2-1 3h7c0-7-10-6-14 0z" fill="#0078d7"/></Pic></TaskButton>
      <TaskButton aria-label="应用商店"><Pic w={22} h={24}><path d="M0 7l22-2v19L0 21z" fill="#fff"/><path d="M6 7Q7 1 11 1t5 5" stroke="#fff" strokeWidth="1.500"/><path d="M5 11l5-.500v4H5zM11 10.500l6-.500v4.500h-6zM5 15.500h5v4l-5-.500zM11 15.500h6V20l-6-.500z" fill="#010c12"/></Pic></TaskButton>
      <TaskButton aria-label="文件夹"><Pic w={22} h={20}><path d="M0 1h8l2 3h12v14H0z" fill="#ffe08a"/><path d="M0 6h22v2H0z" fill="#f6c95d"/><path d="M4 19v-9h14v9h-4v-5H8v5z" fill="#2b9be0"/></Pic></TaskButton>
      <TaskButton $open aria-label="浏览器"><Swirl color="#1391ef"/></TaskButton>
      <TaskButton $open aria-label="安全浏览器"><Pic w={22} h={22}><circle cx="11" cy="11" r="10" fill="#55bb22" stroke="#eef8e6"/><path d="M6 11h10q0-5-5-5t-5 5q0 5 5 5 3 0 4-2" stroke="#fff" strokeWidth="2.500"/><path d="M2 21Q0 17 9 9q9-8 12-7" stroke="#75d52a" strokeWidth="1.500"/></Pic></TaskButton>
      <TaskButton $open aria-label="广联达计价"><Swirl color="#1785b9"><path d="M2 9l15 13-5 4Q1 23 2 9z" fill="#ed5364"/></Swirl></TaskButton>
      <TaskButton $on aria-label="钢筋算量"><AppLogo size={24}/></TaskButton>
    </TaskGroup>
    <Tray>
      <Stack $width={62}>22%<br/>CPU使用</Stack>
      <Pic w={14} h={8}><path d="M1 7l6-6 6 6" stroke="#fff" strokeWidth="1.300"/></Pic>
      <Pic w={17} h={12}><path d="M4.500 3.500h11v7h-11z" stroke="#fff"/><path d="M6 5h8v4H6z" fill="#fff"/><path d="M1 0v3M3.500 0v3M0 3h5v2H0zM2 5v5h3" stroke="#fff"/></Pic>
      <Pic w={14} h={14}><path d="M1 13A12 12 0 0113 1M4 13a9 9 0 019-8M7 13a6 6 0 016-5M10 13q0-3 3-3" stroke="#ccc" strokeWidth="1.300"/></Pic>
      <Pic w={17} h={14}><path d="M1 5h2l4-3.500v11L3 9H1zM9 5q2 2 0 4M11 3q4 4 0 8" stroke="#fff"/><path d="M13 1q5 6 0 12" stroke="#777"/></Pic>
      <InputMode>中</InputMode>
      <Sogou size={16}/>
      <Stack $width={74}>8:19<br/>2017/7/9</Stack>
      <Notice aria-label="通知"><Pic w={17} h={17}><path d="M.5 1.500h15v11h-5l-2.500 3-2.500-3h-5z" stroke="#fff"/></Pic></Notice>
    </Tray>
  </TaskBar>
);

const App = () => {
  return (
    <Page>
      <GlobalStyle/>
      <Top/>
      <Body>
        <Side/>
        <Work>
          <PartStrip>
            <Tool><Icon name="create"/>新建<Caret tight/></Tool>
            <Tool><Icon name="remove"/>删除</Tool>
            <Tool><Icon name="copy"/>复制</Tool>
            <Tool><Icon name="rename"/>重命名</Tool>
            <Rule/>
            <Floor>
              楼层
              <FloorPick>
                <FloorSelect><option>基础层</option></FloorSelect>
                <Caret/>
              </FloorPick>
            </Floor>
            <Rule/>
            <Tool><Icon name="sort"/>排序<Caret tight/></Tool>
            <Tool><Icon name="filter"/>过滤<Caret tight/></Tool>
            <Rule/>
            <Tool><Icon name="fromFloor"/>从其他楼层复制构件</Tool>
            <Tool><Icon name="toFloor"/>复制构件到其他楼层</Tool>
            <Rule/>
            <Tool>查找<Caret tight/></Tool>
            <Rule/>
            <Tool $off><Icon name="up"/>上移</Tool>
            <Tool $off><Icon name="down"/>下移</Tool>
          </PartStrip>
          <Columns>
            <PartList/>
            <PropertyEditor/>
          </Columns>
        </Work>
      </Body>
      <StatusBar>
        <StatusCell $width={148}/>
        <StatusCell $width={78}><Mixed text="层高:3.55m"/></StatusCell>
        <StatusCell $width={98}><Mixed text="底标高:-3.58m"/></StatusCell>
        <StatusCell $width={48}><Mixed text="0"/></StatusCell>
        <StatusCell>名称在当前层当前构件类型下不允许重名</StatusCell>
        <StatusCell $width={70}><Mixed text="489.4 FPS"/></StatusCell>
      </StatusBar>
      <Tasks/>
    </Page>
  )
}

export default App
